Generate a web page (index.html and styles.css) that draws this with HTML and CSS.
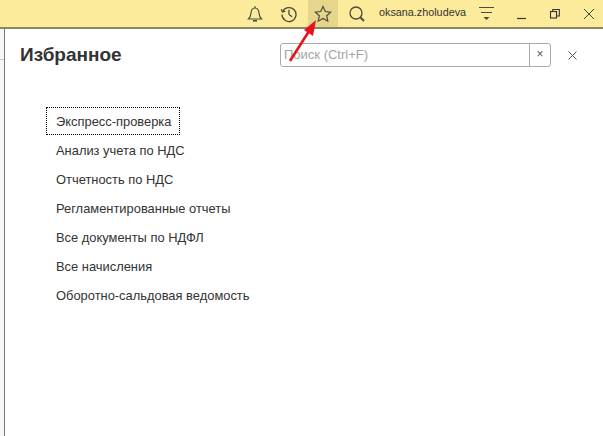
FILE: index.html
```html
<!DOCTYPE html>
<html lang="ru">
<head>
<meta charset="utf-8">
<title>Избранное</title>
<link rel="stylesheet" href="styles.css">
</head>
<body>
<header class="topbar">
  <button class="tool tool-bell" aria-label="Уведомления">
    <svg width="18" height="18" viewBox="0 0 18 18" fill="none" stroke="#4a4a40" stroke-width="1.2"><path d="M2.5 14h13c-1.6-1.6-2.2-3-2.4-5.5C12.800 5 11.500 3 9 3S5.200 5 4.900 8.500C4.700 11 4.100 12.400 2.500 14z"/><path d="M9 1.200V3"/><path d="M7 15.800h4" stroke-width="1.600"/></svg>
  </button>
  <button class="tool tool-history" aria-label="История">
    <svg width="18" height="18" viewBox="0 0 18 18" fill="none" stroke="#4a4a40" stroke-width="1.300"><path d="M2.700 6.500A7 7 0 1 1 2 9.500"/><path d="M1.200 4.200l1.300 2.800 2.900-.9"/><path d="M9 4.800V9.500l3.200 2.200"/></svg>
  </button>
  <button class="tool tool-star" aria-label="Избранное">
    <svg width="18" height="18" viewBox="0 0 18 18" fill="none" stroke="#4a4a40" stroke-width="1.200"><path d="M9 1.500l2.300 5 5.400.6-4 3.700 1.100 5.400L9 13.500l-4.800 2.700 1.100-5.400-4-3.700 5.400-.6z"/></svg>
  </button>
  <button class="tool tool-search" aria-label="Поиск">
    <svg width="18" height="18" viewBox="0 0 18 18" fill="none" stroke="#4a4a40"><circle cx="8" cy="8" r="6" stroke-width="1.300"/><path d="M12.500 12.500l3.500 3.500" stroke-width="2"/></svg>
  </button>
  <span class="user">oksana.zholudeva</span>
  <button class="tool tool-menu" aria-label="Меню">
    <svg width="16" height="16" viewBox="0 0 16 16"><path d="M0 1.500h15M2 6.500h11" stroke="#4a4a40" stroke-width="1.100" fill="none"/><path d="M4.500 11h6l-3 3z" fill="#4a4a40"/></svg>
  </button>
  <button class="tool tool-min" aria-label="Свернуть">
    <svg width="12" height="12" viewBox="0 0 12 12"><path d="M1 10.500h9" stroke="#333" stroke-width="1.200"/></svg>
  </button>
  <button class="tool tool-max" aria-label="Развернуть">
    <svg width="12" height="12" viewBox="0 0 12 12" fill="none" stroke="#333" stroke-width="1.100"><rect x="1.500" y="3.500" width="6" height="6.500"/><path d="M3.800 3.500V1.500h6.500v6.500H7.500"/></svg>
  </button>
  <button class="tool tool-close" aria-label="Закрыть">
    <svg width="12" height="12" viewBox="0 0 12 12" fill="none" stroke="#444" stroke-width="1"><path d="M1 1l10 10M11 1L1 11"/></svg>
  </button>
</header>
<div class="workspace">
  <aside class="strip"><div class="strip-head"></div></aside>
  <main class="panel">
    <div class="panel-head">
      <h1 class="title">Избранное</h1>
      <div class="search">
        <span class="search-field">Поиск (Ctrl+F)</span>
        <span class="search-clear">×</span>
      </div>
      <button class="panel-close" aria-label="Закрыть">
        <svg width="9" height="9" viewBox="0 0 9 9" fill="none" stroke="#555" stroke-width="1"><path d="M.5.5l8 8M8.500.5l-8 8"/></svg>
      </button>
    </div>
    <ul class="list">
      <li class="item item-focus">Экспресс-проверка</li>
      <li class="item">Анализ учета по НДС</li>
      <li class="item">Отчетность по НДС</li>
      <li class="item">Регламентированные отчеты</li>
      <li class="item">Все документы по НДФЛ</li>
      <li class="item">Все начисления</li>
      <li class="item">Оборотно-сальдовая ведомость</li>
    </ul>
  </main>
</div>
<svg class="arrow" width="40" height="48" viewBox="0 0 40 48"><path d="M2 42L23 9" stroke="#e8121c" stroke-width="2.600" fill="none"/><path d="M28 1L16 11l9 6z" fill="#e8121c"/></svg>
</body>
</html>
```
FILE: styles.css
```css
* { box-sizing: border-box; }
html, body { margin: 0; height: 100%; }
body {
  position: relative;
  width: 603px;
  height: 436px;
  overflow: hidden;
  background: #fff;
  font-family: "Liberation Sans", Arial, sans-serif;
  color: #333;
  display: flex;
  flex-direction: column;
}
button { background: none; border: 0; padding: 0; margin: 0; display: flex; align-items: center; justify-content: center; flex: none; }
.topbar {
  height: 29px;
  flex: none;
  display: flex;
  align-items: stretch;
  background: #fdeb9c;
  border-bottom: 2px solid #8a8569;
  padding-left: 240px;
}
.tool { height: 27px; }
.tool-bell { width: 30px; }
.tool-history { width: 38px; }
.tool-star { width: 30px; background: #e6d68b; }
.tool-search { width: 38px; }
.user {
  width: 100px;
  flex: none;
  line-height: 25px;
  padding-left: 3px;
  font-size: 10.8px;
  white-space: nowrap;
  color: #333;
}
.tool-menu { width: 22px; }
.tool-min { width: 34px; margin-left: 7px; }
.tool-max { width: 32px; }
.tool-close { width: 36px; }
.workspace { flex: 1; display: flex; min-height: 0; }
.strip { width: 5px; flex: none; background: #f7f7f7; border-right: 1px solid #777; }
.strip-head { height: 31px; border-bottom: 1px solid #c8c8c8; }
.panel { flex: 1; min-width: 0; padding: 14px 0 0 15px; }
.panel-head { display: flex; align-items: center; height: 24px; }
.title { margin: 0; width: 260px; flex: none; font-size: 19px; line-height: 24px; font-weight: bold; color: #333; }
.search {
  width: 271px;
  height: 24px;
  flex: none;
  display: flex;
  border: 1px solid #aaa;
  border-radius: 3px;
}
.search-field {
  flex: 1;
  padding-left: 3px;
  line-height: 22px;
  font-size: 13px;
  color: #a4a4a4;
}
.search-clear {
  width: 21px;
  border-left: 1px solid #aaa;
  text-align: center;
  line-height: 21px;
  font-size: 12px;
  color: #555;
}
.panel-close { width: 9px; height: 9px; margin-left: 17px; }
.list { list-style: none; margin: 40px 0 0 26px; padding: 0; }
.item {
  height: 29px;
  width: max-content;
  padding: 0 10px;
  font-size: 12.9px;
  line-height: 29px;
  white-space: nowrap;
  color: #333;
}
.item-focus { outline: 1px dotted #000; outline-offset: -1px; height: 28px; line-height: 30px; margin-bottom: 1px; width: 134px; }
.arrow { position: absolute; left: 288px; top: 19px; }
```
